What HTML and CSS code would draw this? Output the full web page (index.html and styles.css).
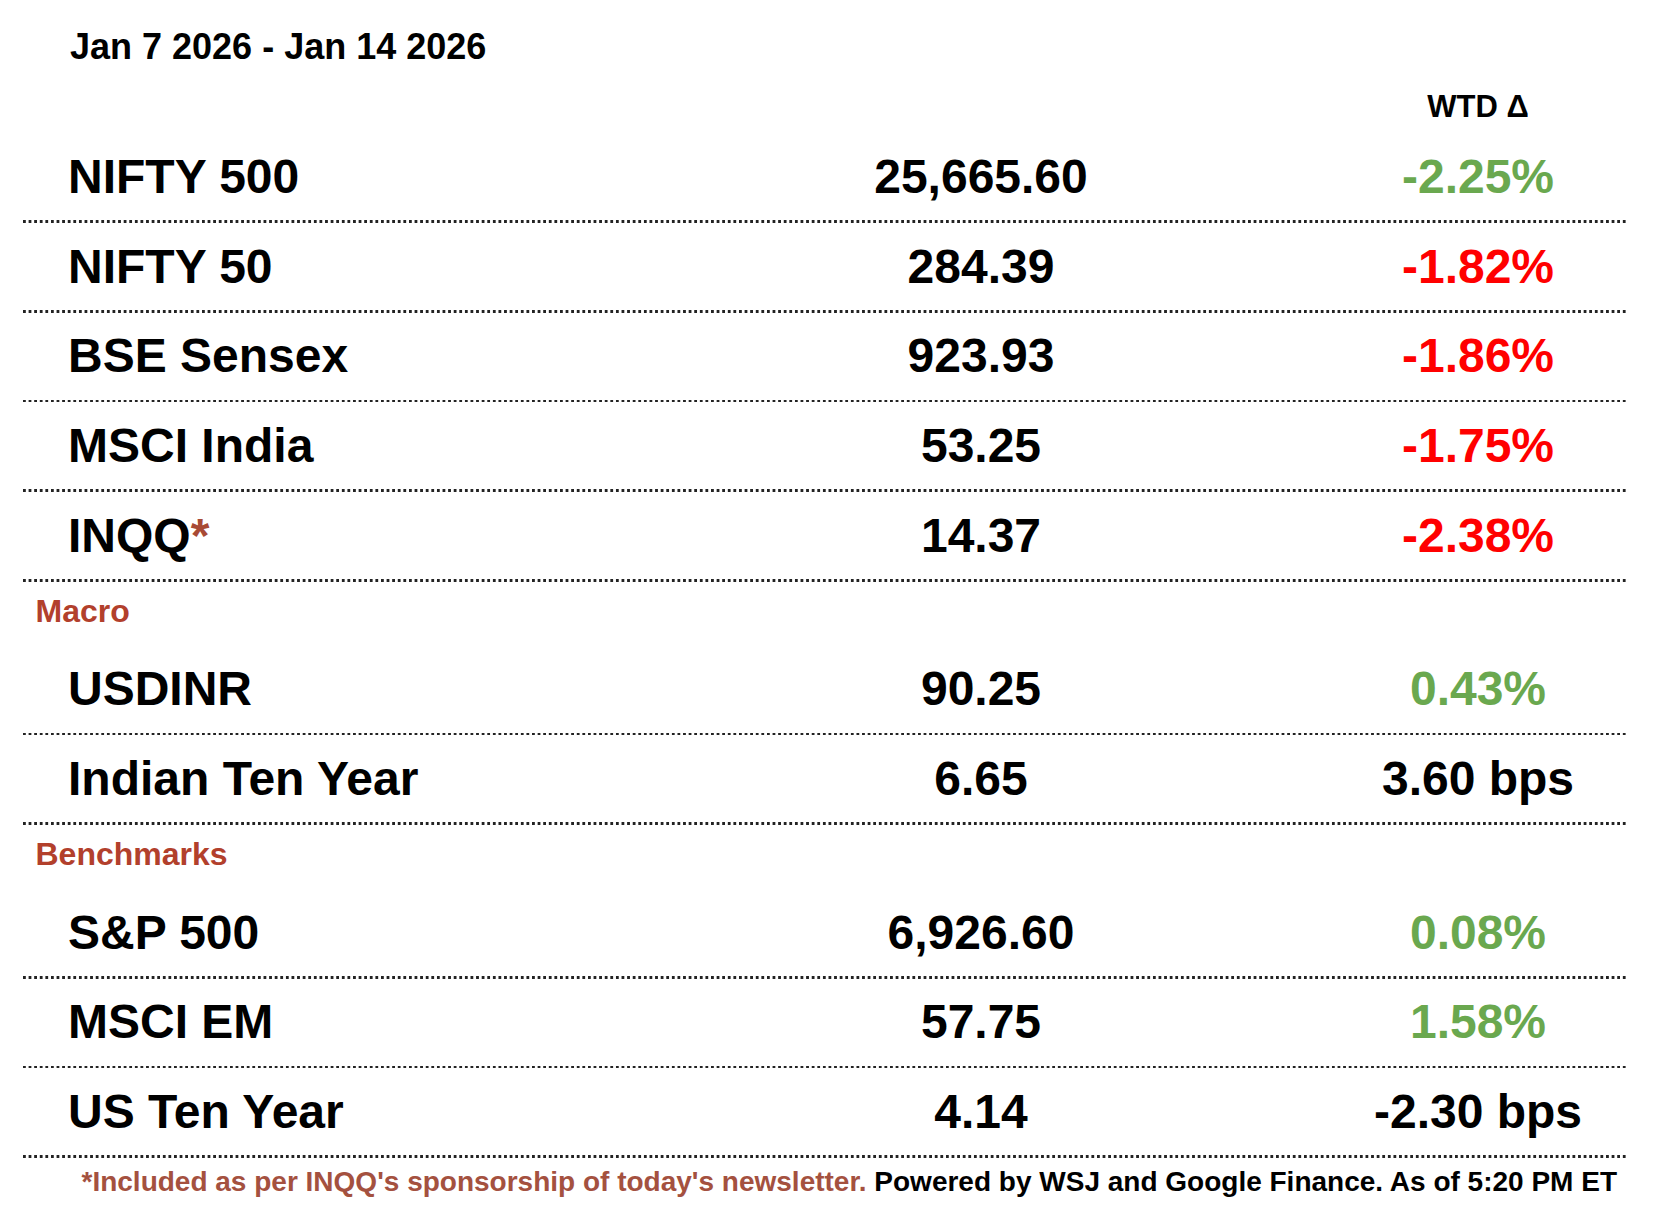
FILE: index.html
```html
<!DOCTYPE html>
<html lang="en">
<head>
<meta charset="utf-8">
<title>Weekly Market Summary</title>
<link rel="stylesheet" href="styles.css">
</head>
<body>
<div class="sheet">
  <div class="date">Jan 7 2026 - Jan 14 2026</div>
  <div class="colhead"><span class="chg">WTD Δ</span></div>

  <div class="row"><span class="name">NIFTY 500</span><span class="val">25,665.60</span><span class="chg pos">-2.25%</span></div>
  <div class="row"><span class="name">NIFTY 50</span><span class="val">284.39</span><span class="chg neg">-1.82%</span></div>
  <div class="row"><span class="name">BSE Sensex</span><span class="val">923.93</span><span class="chg neg">-1.86%</span></div>
  <div class="row"><span class="name">MSCI India</span><span class="val">53.25</span><span class="chg neg">-1.75%</span></div>
  <div class="row"><span class="name">INQQ<span class="star">*</span></span><span class="val">14.37</span><span class="chg neg">-2.38%</span></div>

  <div class="section">Macro</div>
  <div class="row"><span class="name">USDINR</span><span class="val">90.25</span><span class="chg pos">0.43%</span></div>
  <div class="row"><span class="name">Indian Ten Year</span><span class="val">6.65</span><span class="chg">3.60 bps</span></div>

  <div class="section">Benchmarks</div>
  <div class="row"><span class="name">S&amp;P 500</span><span class="val">6,926.60</span><span class="chg pos">0.08%</span></div>
  <div class="row"><span class="name">MSCI EM</span><span class="val">57.75</span><span class="chg pos">1.58%</span></div>
  <div class="row"><span class="name">US Ten Year</span><span class="val">4.14</span><span class="chg">-2.30 bps</span></div>

  <div class="footer"><span class="note">*Included as per INQQ's sponsorship of today's newsletter.</span> Powered by WSJ and Google Finance. As of 5:20 PM ET</div>
</div>
</body>
</html>
```

FILE: styles.css
```css
* { box-sizing: border-box; }
html, body { margin: 0; padding: 0; background: #fff; }
body {
  font-family: "Liberation Sans", Arial, Helvetica, sans-serif;
  font-weight: 700;
  color: #000;
}
.sheet {
  width: 1605px;
  margin-left: 23px;
}
.date {
  height: 67px;
  padding: 27px 0 0 47px;
  font-size: 36px;
  line-height: 40px;
}
.colhead {
  display: grid;
  grid-template-columns: 718px 390px 1fr;
  height: 66.3px;
  padding: 24px 0 0 45px;
  font-size: 31px;
  line-height: 31px;
}
.colhead .chg { grid-column: 3; }
.row {
  display: grid;
  grid-template-columns: 718px 390px 1fr;
  align-items: center;
  height: 89.66px;
  padding: 0 0 2px 45px;
  font-size: 48px;
  line-height: 56px;
  white-space: nowrap;
  background-image: linear-gradient(to right, #222 0, #222 2.5px, transparent 2.5px);
  background-size: 5.6px 2.5px;
  background-repeat: repeat-x;
  background-position: 0 100%;
}
.val { text-align: center; }
.chg { text-align: center; padding-left: 152px; }
.pos { color: #6aa84f; }
.neg { color: #ff0000; }
.star { color: #a84a35; }
.section {
  height: 64px;
  padding: 9px 0 0 12.5px;
  font-size: 32px;
  line-height: 40px;
  color: #b2402c;
}
.footer {
  margin-top: 7px;
  padding-right: 11px;
  text-align: right;
  font-size: 28px;
  line-height: 34px;
  white-space: nowrap;
}
.note { color: #a4513f; }
```
